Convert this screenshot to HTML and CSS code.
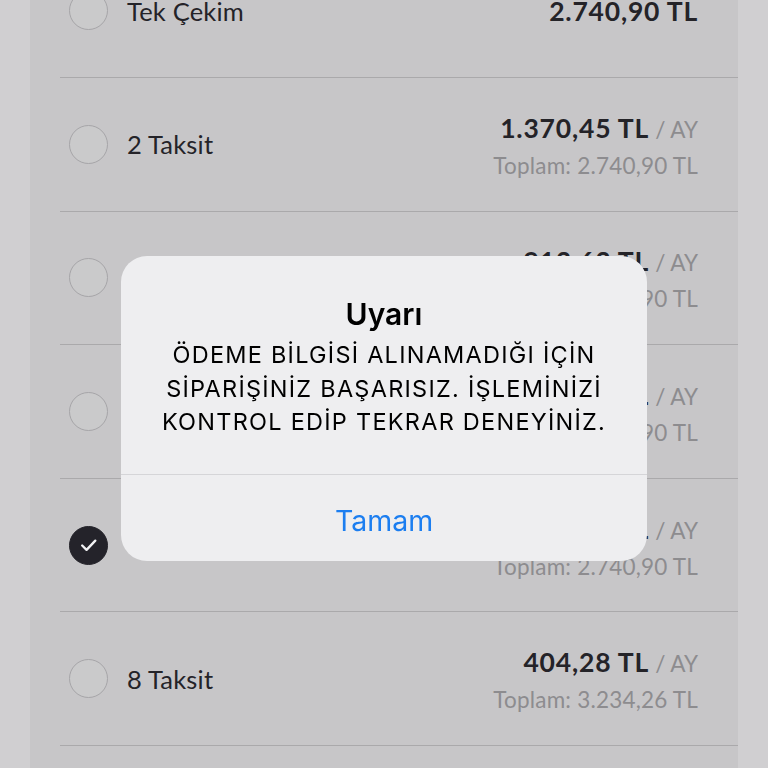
FILE: index.html
```html
<!DOCTYPE html>
<html lang="tr">
<head>
<meta charset="utf-8">
<title>Taksit Seçenekleri</title>
<link rel="stylesheet" href="styles.css">
</head>
<body>
<div class="screen">
  <div class="panel">
    <ul class="options">
      <li class="option">
        <span class="radio"></span>
        <span class="label">Tek Çekim</span>
        <span class="price single"><span class="amount">2.740,90 TL</span></span>
      </li>
      <li class="option">
        <span class="radio"></span>
        <span class="label">2 Taksit</span>
        <span class="price">
          <span class="line"><span class="amount">1.370,45 TL</span> <span class="unit">/ AY</span></span>
          <span class="total">Toplam: 2.740,90 TL</span>
        </span>
      </li>
      <li class="option">
        <span class="radio"></span>
        <span class="label">3 Taksit</span>
        <span class="price">
          <span class="line"><span class="amount">913,63 TL</span> <span class="unit">/ AY</span></span>
          <span class="total">Toplam: 2.740,90 TL</span>
        </span>
      </li>
      <li class="option">
        <span class="radio"></span>
        <span class="label">4 Taksit</span>
        <span class="price">
          <span class="line"><span class="amount">685,23 TL</span> <span class="unit">/ AY</span></span>
          <span class="total">Toplam: 2.740,90 TL</span>
        </span>
      </li>
      <li class="option">
        <span class="radio checked">
          <svg viewBox="0 0 38 38" width="38" height="38"><path d="M12.5 19.5 L17 24 L26 14.5" fill="none" stroke="#f2f2f4" stroke-width="2.4" stroke-linecap="round" stroke-linejoin="round"/></svg>
        </span>
        <span class="label">6 Taksit</span>
        <span class="price">
          <span class="line"><span class="amount">456,82 TL</span> <span class="unit">/ AY</span></span>
          <span class="total">Toplam: 2.740,90 TL</span>
        </span>
      </li>
      <li class="option">
        <span class="radio"></span>
        <span class="label">8 Taksit</span>
        <span class="price">
          <span class="line"><span class="amount">404,28 TL</span> <span class="unit">/ AY</span></span>
          <span class="total">Toplam: 3.234,26 TL</span>
        </span>
      </li>
      <li class="option">
        <span class="radio"></span>
        <span class="label">9 Taksit</span>
        <span class="price">
          <span class="line"><span class="amount">359,36 TL</span> <span class="unit">/ AY</span></span>
          <span class="total">Toplam: 3.234,26 TL</span>
        </span>
      </li>
    </ul>
  </div>
</div>

<div class="alert" role="alertdialog">
  <div class="alert-body">
    <h2 class="alert-title">Uyarı</h2>
    <p class="alert-message">ÖDEME BİLGİSİ ALINAMADIĞI İÇİN SİPARİŞİNİZ BAŞARISIZ. İŞLEMİNİZİ KONTROL EDİP TEKRAR DENEYİNİZ.</p>
  </div>
  <div class="alert-actions">
    <button class="alert-button" type="button">Tamam</button>
  </div>
</div>
</body>
</html>
```

FILE: styles.css
```css
html, body {
  margin: 0;
  padding: 0;
  height: 100%;
  overflow: hidden;
}

body {
  background: #d0cfd1;
  font-family: Lato, "Open Sans", sans-serif;
  color: #242328;
}

.screen {
  padding: 0 30px;
  height: 100%;
}

.panel {
  background: #c7c6c8;
  height: 100%;
  overflow: hidden;
}

.options {
  list-style: none;
  margin: -55.6px 0 0 30px;
  padding: 0;
}

.option {
  box-sizing: border-box;
  height: 133.6px;
  border-bottom: 1px solid #aaa9ab;
  display: flex;
  align-items: center;
  padding: 0 40px 0 9px;
}

.radio {
  box-sizing: border-box;
  width: 39px;
  height: 39px;
  border-radius: 50%;
  border: 1.6px solid #a6a5a8;
  background: #cacacb;
  flex: none;
  display: flex;
  align-items: center;
  justify-content: center;
}

.radio.checked {
  background: #24232a;
  border-color: #24232a;
}

.radio svg {
  display: block;
}

.label {
  margin-left: 19px;
  font-size: 25.5px;
  letter-spacing: 0.2px;
  flex: 1;
}

.price {
  display: flex;
  flex-direction: column;
  align-items: flex-end;
  text-align: right;
  padding-top: 5px;
}

.price.single {
  padding-top: 0;
}

.line {
  line-height: 35px;
}

.amount {
  font-size: 26.5px;
  font-weight: 700;
  color: #242328;
  letter-spacing: 0.8px;
}

.unit {
  font-size: 22.5px;
  color: #8d8c8f;
  margin-left: 2px;
}

.total {
  font-size: 22.5px;
  line-height: 34px;
  color: #8d8c8f;
  letter-spacing: 0.2px;
}

/* alert dialog floating over the dimmed list */
.alert {
  position: fixed;
  top: 256px;
  left: 121px;
  width: 526px;
  height: 305px;
  background: #eeeef0;
  border-radius: 26px;
  display: flex;
  flex-direction: column;
  font-family: Inter, Roboto, sans-serif;
  color: #000;
  overflow: hidden;
}

.alert-body {
  flex: none;
  height: 218px;
  box-sizing: border-box;
  padding: 37px 16px 0;
  text-align: center;
}

.alert-title {
  margin: 0;
  font-size: 30px;
  line-height: 42px;
  font-weight: 600;
}

.alert-message {
  margin: 3px 0 0;
  font-size: 23.5px;
  line-height: 33.5px;
  font-weight: 400;
  letter-spacing: 1.25px;
}

.alert-actions {
  flex: 1;
  border-top: 1.5px solid #d5d5d8;
  display: flex;
}

.alert-button {
  flex: 1;
  border: 0;
  background: transparent;
  font-family: Inter, Roboto, sans-serif;
  font-size: 28.5px;
  color: #1c7ef0;
  padding: 4px 0 0;
}
```
